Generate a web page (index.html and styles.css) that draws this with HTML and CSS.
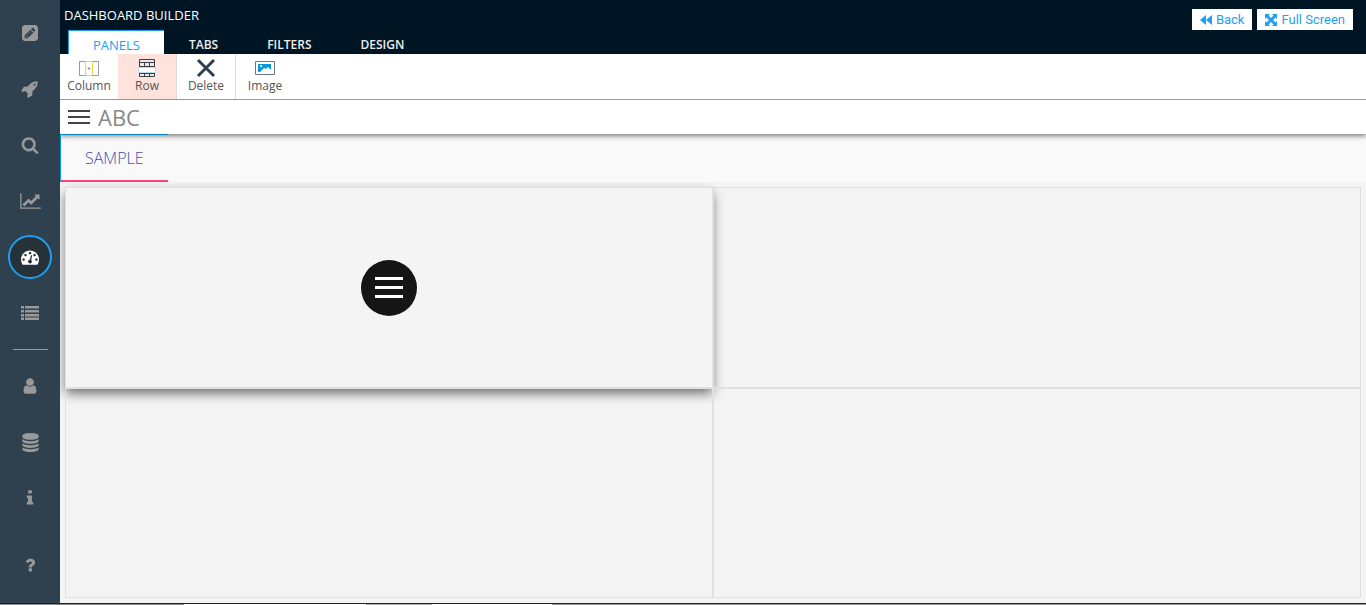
FILE: index.html
```
<!DOCTYPE html>
<html lang="en">
<head>
    <meta charset="UTF-8">
    <meta name="viewport" content="width=device-width, initial-scale=1.0">
    <title>Dashboard Builder</title>
    <link rel="stylesheet" href="styles.css">
</head>
<body>
    <div class="app">
        <nav class="sidebar" aria-label="Main">
            <a href="#" class="side-link" aria-label="Edit">
                <svg width="16" height="16" viewBox="0 0 1536 1536"><path d="M404 980l152 152-52 52h-56v-96h-96v-56zm414-390q14 13-3 30l-291 291q-17 17-30 3-14-13 3-30l291-291q17-17 30-3zm-274 690l544-544-288-288-544 544v288h288zm608-608l92-92q28-28 28-68t-28-68l-152-152q-28-28-68-28t-68 28l-92 92zm384-384v960q0 119-84.5 203.5t-203.5 84.5h-960q-119 0-203.5-84.5t-84.5-203.5v-960q0-119 84.5-203.5t203.5-84.5h960q119 0 203.5 84.5t84.5 203.5z"/></svg>
            </a>
            <a href="#" class="side-link" aria-label="Launch">
                <svg width="18" height="18" viewBox="0 0 1792 1792"><path d="M1440 448q0-40-28-68t-68-28-68 28-28 68 28 68 68 28 68-28 28-68zm224-288q0 249-75.5 430.5t-253.5 360.5q-81 80-195 176l-20 379q-2 16-16 26l-384 224q-7 4-16 4-12 0-23-9l-64-64q-13-14-8-32l85-276-281-281-276 85q-3 1-9 1-14 0-23-9l-64-64q-17-19-5-39l224-384q10-14 26-16l379-20q96-114 176-195 188-187 358-258t431-71q14 0 24 9.5t10 22.5z"/></svg>
            </a>
            <a href="#" class="side-link" aria-label="Search">
                <svg width="18" height="18" viewBox="0 0 1792 1792"><path d="M1216 832q0-185-131.5-316.5t-316.5-131.5-316.5 131.5-131.5 316.5 131.5 316.5 316.5 131.5 316.5-131.5 131.5-316.5zm512 832q0 52-38 90t-90 38q-54 0-90-38l-343-342q-179 124-399 124-143 0-273.5-55.5t-225-150-150-225-55.5-273.5 55.5-273.5 150-225 225-150 273.5-55.5 273.5 55.5 225 150 150 225 55.5 273.5q0 220-124 399l343 343q37 37 37 90z"/></svg>
            </a>
            <a href="#" class="side-link" aria-label="Charts">
                <svg width="21" height="18" viewBox="0 0 2048 1792"><path d="M2048 1536v128h-2048v-1536h128v1408h1920zm-128-1248v435q0 21-19.5 29.5t-35.5-7.5l-121-121-633 633q-10 10-23 10t-23-10l-233-233-416 416-192-192 585-585q10-10 23-10t23 10l233 233 464-464-121-121q-16-16-7.5-35.5t29.5-19.5h435q14 0 23 9t9 23z"/></svg>
            </a>
            <a href="#" class="side-link side-link-active" aria-label="Dashboards">
                <svg width="18" height="18" viewBox="0 0 1792 1792"><path d="M384 1152q0-53-37.5-90.5t-90.5-37.5-90.5 37.5-37.5 90.5 37.5 90.5 90.5 37.5 90.5-37.5 37.5-90.5zm192-448q0-53-37.5-90.5t-90.5-37.5-90.5 37.5-37.5 90.5 37.5 90.5 90.5 37.5 90.5-37.5 37.5-90.5zm428 481l101-382q6-26-7.5-48.5t-38.5-29.5-48 6.5-30 39.5l-101 382q-60 5-107 43.5t-63 98.5q-20 77 20 146t117 89 146-20 89-117q16-60-6-117t-72-91zm660-33q0-53-37.5-90.5t-90.5-37.5-90.5 37.5-37.5 90.5 37.5 90.5 90.5 37.5 90.5-37.5 37.5-90.5zm-640-640q0-53-37.5-90.5t-90.5-37.5-90.5 37.5-37.5 90.5 37.5 90.5 90.5 37.5 90.5-37.5 37.5-90.5zm448 192q0-53-37.5-90.5t-90.5-37.5-90.5 37.5-37.5 90.5 37.5 90.5 90.5 37.5 90.5-37.5 37.5-90.5zm320 448q0 261-141 483-19 29-54 29h-1402q-35 0-54-29-141-221-141-483 0-182 71-348t191-286 286-191 348-71 348 71 286 191 191 286 71 348z"/></svg>
            </a>
            <a href="#" class="side-link" aria-label="Lists">
                <svg width="18" height="14" viewBox="0 0 18 14"><path d="M0 0h3v2.500H0zM4 0h14v2.500H4zM0 4h3v2.500H0zM4 4h14v2.500H4zM0 8h3v2.500H0zM4 8h14v2.500H4zM0 11.500h3V14H0zM4 11.500h14V14H4z"/></svg>
            </a>
            <hr class="side-rule">
            <a href="#" class="side-link" aria-label="Users">
                <svg width="18" height="18" viewBox="0 0 1792 1792"><path d="M1536 1399q0 109-62.5 187t-150.5 78h-854q-88 0-150.5-78t-62.5-187q0-85 8.5-160.5t31.5-152 58.5-131 94-89 134.5-34.5q131 128 313 128t313-128q76 0 134.5 34.5t94 89 58.5 131 31.5 152 8.5 160.5zm-256-887q0 159-112.5 271.5t-271.5 112.5-271.5-112.5-112.5-271.5 112.5-271.5 271.5-112.5 271.5 112.5 112.5 271.5z"/></svg>
            </a>
            <a href="#" class="side-link" aria-label="Data sources">
                <svg width="19" height="19" viewBox="0 0 1792 1792"><path d="M896 768q237 0 443-43t325-127v170q0 69-103 128t-280 93.5-385 34.5-385-34.5-280-93.5-103-128v-170q119 84 325 127t443 43zm0 768q237 0 443-43t325-127v170q0 69-103 128t-280 93.5-385 34.5-385-34.5-280-93.5-103-128v-170q119 84 325 127t443 43zm0-384q237 0 443-43t325-127v170q0 69-103 128t-280 93.5-385 34.5-385-34.5-280-93.5-103-128v-170q119 84 325 127t443 43zm0-1152q208 0 385 34.5t280 93.5 103 128v128q0 69-103 128t-280 93.5-385 34.5-385-34.5-280-93.5-103-128v-128q0-69 103-128t280-93.5 385-34.5z"/></svg>
            </a>
            <a href="#" class="side-link" aria-label="About">
                <svg width="18" height="18" viewBox="0 0 1792 1792"><path d="M1216 1344v128q0 26-19 45t-45 19h-512q-26 0-45-19t-19-45v-128q0-26 19-45t45-19h64v-384h-64q-26 0-45-19t-19-45v-128q0-26 19-45t45-19h384q26 0 45 19t19 45v576h64q26 0 45 19t19 45zm-128-1152v192q0 26-19 45t-45 19h-256q-26 0-45-19t-19-45v-192q0-26 19-45t45-19h256q26 0 45 19t19 45z"/></svg>
            </a>
            <a href="#" class="side-link side-link-help" aria-label="Help">
                <svg width="18" height="18" viewBox="0 0 1792 1792"><path d="M1088 1256v240q0 16-12 28t-28 12h-240q-16 0-28-12t-12-28v-240q0-16 12-28t28-12h240q16 0 28 12t12 28zm316-600q0 54-15.5 101t-35 76.5-55 59.5-57.5 43.5-61 35.5q-41 23-68.5 65t-27.5 67q0 17-12 32.5t-28 15.5h-240q-15 0-25.5-18.5t-10.5-37.5v-45q0-83 65-156.5t143-108.5q59-27 84-56t25-76q0-42-46.5-74t-107.5-32q-65 0-108 29-35 25-107 115-13 16-31 16-12 0-25-8l-164-125q-13-10-15.5-25t5.5-28q160-266 464-266 80 0 161 31t146 83 106 127.5 41 158.5z"/></svg>
            </a>
        </nav>

        <main class="main">
            <header class="header">
                <div class="header-left">
                    <h1 class="header-title">DASHBOARD BUILDER</h1>
                    <div class="menu-tabs">
                        <button type="button" class="menu-tab menu-tab-active">PANELS</button>
                        <button type="button" class="menu-tab">TABS</button>
                        <button type="button" class="menu-tab">FILTERS</button>
                        <button type="button" class="menu-tab">DESIGN</button>
                    </div>
                </div>
                <div class="header-actions">
                    <button type="button" class="action">
                        <svg width="12" height="10" viewBox="0 0 12 10"><path d="M6 0v10L0 5zM12 0v10L6 5z"/></svg>
                        Back
                    </button>
                    <button type="button" class="action">
                        <svg width="12" height="12" viewBox="0 0 12 12"><path d="M0 0h5L3.500 1.500 6 4l2.500-2.500L7 0h5v5l-1.500-1.500L8 6l2.500 2.500L12 7v5H7l1.500-1.500L6 8l-2.500 2.500L5 12H0V7l1.500 1.500L4 6 1.500 3.500 0 5z"/></svg>
                        Full Screen
                    </button>
                </div>
            </header>

            <div class="toolbar">
                <button type="button" class="tool">
                    <svg width="20" height="20" viewBox="0 0 20 20" fill="none"><path d="M.5 3.500h19v14H.5z" stroke="#999"/><path d="M6.500 3.500h7v14h-7z" stroke="#f5cf47"/><path d="M10 9v3M8.500 10.500h3" stroke="#999"/></svg>
                    Column
                </button>
                <button type="button" class="tool tool-active">
                    <svg width="18" height="20" viewBox="0 0 18 20" fill="none"><path d="M1.500 1.500h15v17h-15zM1.500 4.500h15M1.500 8.500h15M1.500 15.500h15M6.500 4.500v4M11.500 4.500v4M6.500 15.500v3M11.500 15.500v3" stroke="#34404e"/><path d="M.5 9.500h17v5H.5z" fill="#fff" stroke="#bcdcec"/></svg>
                    Row
                </button>
                <button type="button" class="tool">
                    <svg width="20" height="20" viewBox="0 0 20 20" fill="none"><path d="M2 2l16 16M18 2L2 18" stroke="#2c3e50" stroke-width="3"/></svg>
                    Delete
                </button>
                <button type="button" class="tool">
                    <svg width="20" height="20" viewBox="0 0 20 20" fill="none"><path d="M.5 3.500h19v13H.5z" stroke="#67788a" fill="#fff"/><path d="M3 6h13v6l-1-1-2-2-2 2-2-1-3 3-1 1H3z" fill="#0d96dc"/><circle cx="6" cy="8" r="1" fill="#fff"/></svg>
                    Image
                </button>
            </div>

            <div class="title-bar">
                <button type="button" class="burger" aria-label="Menu">
                    <svg width="22" height="14" viewBox="0 0 22 14"><path d="M0 0h22v2H0zM0 6h22v2H0zM0 12h22v2H0z"/></svg>
                </button>
                <h2 class="title">ABC</h2>
            </div>

            <div class="page-tabs">
                <button type="button" class="page-tab">SAMPLE</button>
            </div>

            <section class="panels">
                <div class="panel panel-selected">
                    <button type="button" class="panel-menu" aria-label="Panel menu">
                        <svg width="28" height="21" viewBox="0 0 28 21"><path d="M0 0h28v3H0zM0 9h28v3H0zM0 18h28v3H0z"/></svg>
                    </button>
                </div>
                <div class="panel"></div>
                <div class="panel"></div>
                <div class="panel"></div>
            </section>
        </main>
    </div>
    <div class="bottom-strip"></div>
</body>
</html>
```
FILE: styles.css
```
* {
    box-sizing: border-box;
}
body {
    margin: 0;
    min-height: 100vh;
    display: flex;
    flex-direction: column;
    font-family: "Open Sans", "Noto Sans", sans-serif;
    font-size: 12px;
    background: #f4f4f4;
}
button {
    margin: 0;
    padding: 0;
    border: 0;
    background: none;
    font-family: inherit;
    cursor: pointer;
}
h1, h2 {
    margin: 0;
    font-weight: normal;
}
.app {
    flex: 1;
    display: flex;
}

/* sidebar */
.sidebar {
    width: 60px;
    flex-shrink: 0;
    padding-top: 5px;
    display: flex;
    flex-direction: column;
    align-items: center;
    background: #2f404e;
    position: relative;
    z-index: 4;
}
.side-link {
    width: 44px;
    height: 44px;
    margin: 6px 0;
    display: flex;
    align-items: center;
    justify-content: center;
    border-radius: 50%;
}
.side-link svg {
    fill: #999;
}
.side-link-active {
    border: 2px solid #1e9ff2;
    background: #263238;
}
.side-link-active svg {
    fill: #fff;
}
.side-rule {
    width: 35px;
    margin: 8px 0;
    border: 0;
    border-top: 1px solid #999;
}
.side-link-help {
    margin-top: 17px;
}

/* header */
.main {
    flex: 1;
    min-width: 0;
    display: flex;
    flex-direction: column;
}
.header {
    height: 54px;
    display: flex;
    justify-content: space-between;
    background: #001524;
}
.header-left {
    display: flex;
    flex-direction: column;
    justify-content: space-between;
}
.header-title {
    padding: 6px 0 0 4px;
    font-size: 13px;
    line-height: 18px;
    color: #fff;
}
.menu-tabs {
    display: flex;
    gap: 1px;
    padding-left: 8px;
}
.menu-tab {
    height: 24px;
    padding: 4px 24px 0;
    font-size: 12px;
    font-weight: 600;
    color: #eee;
}
.menu-tab-active {
    background: #fff;
    border-top: 1px solid #1e9ff2;
    border-left: 1px solid #1e9ff2;
    font-size: 13px;
    font-weight: normal;
    color: #1e9ff2;
}
.header-actions {
    display: flex;
    align-items: flex-start;
    gap: 5px;
    padding: 9px 13px 0 0;
}
.action {
    height: 21px;
    padding: 0 8px;
    display: flex;
    align-items: center;
    gap: 4px;
    background: #fff;
    font-family: Roboto, sans-serif;
    font-size: 13px;
    font-weight: normal;
    color: #1e9ff2;
}
.action svg {
    fill: #1e9ff2;
}

/* toolbar */
.toolbar {
    height: 46px;
    display: flex;
    background: #fff;
    border-bottom: 1px solid #999;
    position: relative;
    z-index: 3;
}
.tool {
    width: 59px;
    padding-top: 4px;
    display: flex;
    flex-direction: column;
    align-items: center;
    font-size: 12px;
    line-height: 16px;
    color: #555;
    border-right: 1px solid #ddd;
}
.tool:first-child,
.tool:last-child {
    width: 58px;
    border-right: 0;
}
.tool-active {
    background: #fde3dc;
}

/* title */
.title-bar {
    height: 34px;
    padding: 0 8px;
    display: flex;
    align-items: center;
    gap: 8px;
    background: #fff;
    box-shadow: 0 2px 5px rgba(0, 0, 0, 0.5);
    position: relative;
    z-index: 2;
}
.burger {
    display: flex;
}
.burger svg {
    fill: #444;
}
.title {
    font-size: 22px;
    line-height: 32px;
    color: #888;
}
.page-tabs {
    height: 48px;
    display: flex;
    background: #f9f9f9;
}
.page-tab {
    padding: 0 24px;
    border-top: 1px solid #0288c0;
    border-left: 1px solid #039be5;
    border-bottom: 2px solid #ff4081;
    font-size: 16px;
    font-weight: 300;
    color: #3f51b5;
    position: relative;
    z-index: 2;
}

/* panels */
.panels {
    flex: 1;
    display: grid;
    grid-template-columns: 1fr 1fr;
    grid-template-rows: 201fr 210fr;
    padding: 5px;
    overflow: hidden;
}
.panel {
    border: 1px solid #e0e0e0;
}
.panel-selected {
    display: flex;
    align-items: center;
    justify-content: center;
    background: #f4f4f4;
    box-shadow: 0 6px 12px rgba(0, 0, 0, 0.3), 0 6px 10px -2px rgba(0, 0, 0, 0.35);
}
.panel-menu {
    width: 56px;
    height: 56px;
    display: flex;
    align-items: center;
    justify-content: center;
    border-radius: 50%;
    background: #151515;
}
.panel-menu svg {
    fill: #fff;
}

/* thin strip along the bottom edge */
.bottom-strip {
    height: 2px;
    border-top: 1px solid #222;
    background: linear-gradient(90deg, #888 184px, #fff 184px 366px, #aaa 366px 432px, #fff 432px 552px, #999 552px);
}
```
